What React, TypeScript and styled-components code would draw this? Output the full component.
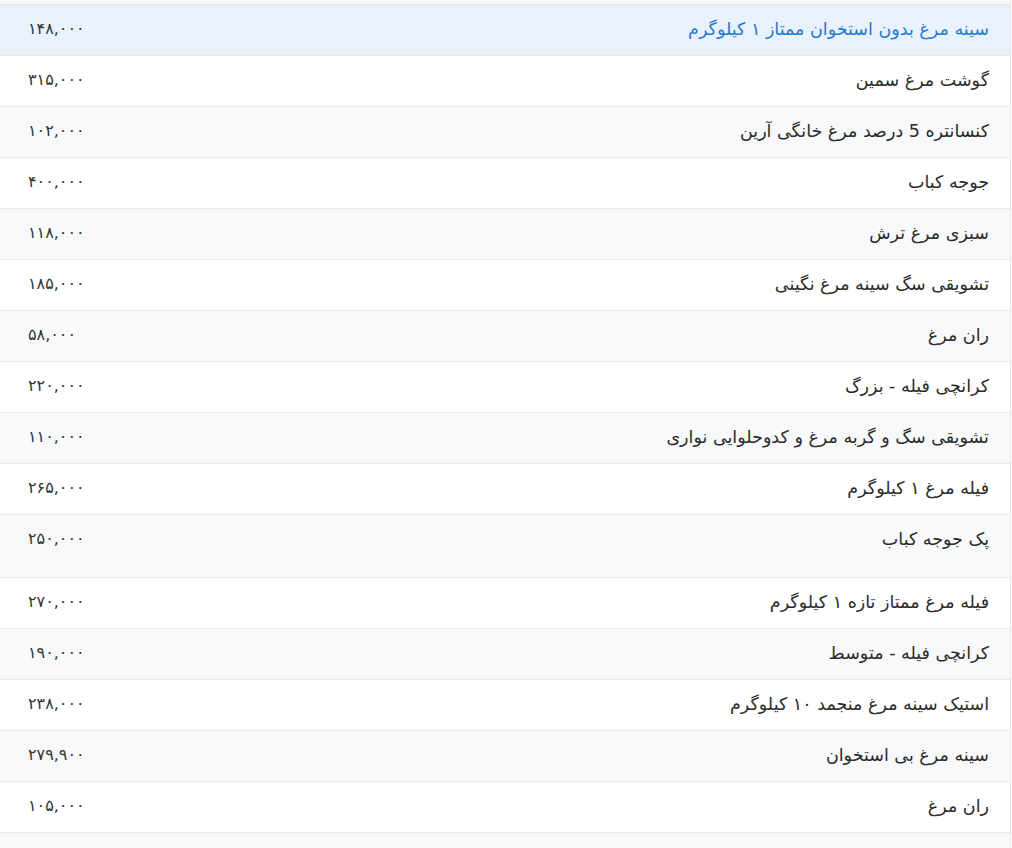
import React from "react";
import styled, { createGlobalStyle } from "styled-components";

const Global = createGlobalStyle`
  html, body { margin: 0; padding: 0; background: #ffffff; }
  body { font-family: "DejaVu Sans", "Noto Sans", sans-serif; }
`;

const Table = styled.div`
  width: 1010px;
  border-right: 1px solid #e6e8eb;
  direction: rtl;
  overflow: hidden;
  height: 848px;
`;

const Row = styled.div<{ $bg: string; $tall?: boolean }>`
  display: flex;
  align-items: flex-start;
  background: ${(p) => p.$bg};
  border-bottom: 1px solid #e6e8eb;
  height: ${(p) => (p.$tall ? 62 : 50)}px;
  box-sizing: content-box;
`;

const Stub = styled.div`
  height: 4px;
  background: #f8f9fa;
  border-bottom: 1px solid #e6e8eb;
`;

const Name = styled.div<{ $active?: boolean }>`
  flex: 1;
  padding: 11px 21px 0 0;
  font-size: 17.5px;
  line-height: 26px;
  color: ${(p) => (p.$active ? "#2479d6" : "#2b2b2b")};
  text-align: right;
  white-space: nowrap;
`;

const Price = styled.div`
  width: 140px;
  box-sizing: border-box;
  padding: 11px 0 0 28px;
  direction: ltr;
  text-align: left;
  font-size: 16px;
  line-height: 26px;
  color: #333;
`;

const items: [string, string][] = [
  ["سینه مرغ بدون استخوان ممتاز ۱ کیلوگرم", "۱۴۸,۰۰۰"],
  ["گوشت مرغ سمین", "۳۱۵,۰۰۰"],
  ["کنسانتره 5 درصد مرغ خانگی آرین", "۱۰۲,۰۰۰"],
  ["جوجه کباب", "۴۰۰,۰۰۰"],
  ["سبزی مرغ ترش", "۱۱۸,۰۰۰"],
  ["تشویقی سگ سینه مرغ نگینی", "۱۸۵,۰۰۰"],
  ["ران مرغ", "۵۸,۰۰۰"],
  ["کرانچی فیله - بزرگ", "۲۲۰,۰۰۰"],
  ["تشویقی سگ و گربه مرغ و کدوحلوایی نواری", "۱۱۰,۰۰۰"],
  ["فیله مرغ ۱ کیلوگرم", "۲۶۵,۰۰۰"],
  ["پک جوجه کباب", "۲۵۰,۰۰۰"],
  ["فیله مرغ ممتاز تازه ۱ کیلوگرم", "۲۷۰,۰۰۰"],
  ["کرانچی فیله - متوسط", "۱۹۰,۰۰۰"],
  ["استیک سینه مرغ منجمد ۱۰ کیلوگرم", "۲۳۸,۰۰۰"],
  ["سینه مرغ بی استخوان", "۲۷۹,۹۰۰"],
  ["ران مرغ", "۱۰۵,۰۰۰"],
  ["", ""],
];

export default function App() {
  return (
    <>
      <Global />
      <Table>
        <Stub />
        {items.map(([name, price], i) => {
          const active = i === 0;
          const bg = active ? "#e9f1fb" : i % 2 === 1 ? "#ffffff" : "#f8f9fa";
          return (
            <Row key={i} $bg={bg} $tall={i === 10}>
              <Name $active={active}>{name}</Name>
              <Price>{price}</Price>
            </Row>
          );
        })}
      </Table>
    </>
  );
}
